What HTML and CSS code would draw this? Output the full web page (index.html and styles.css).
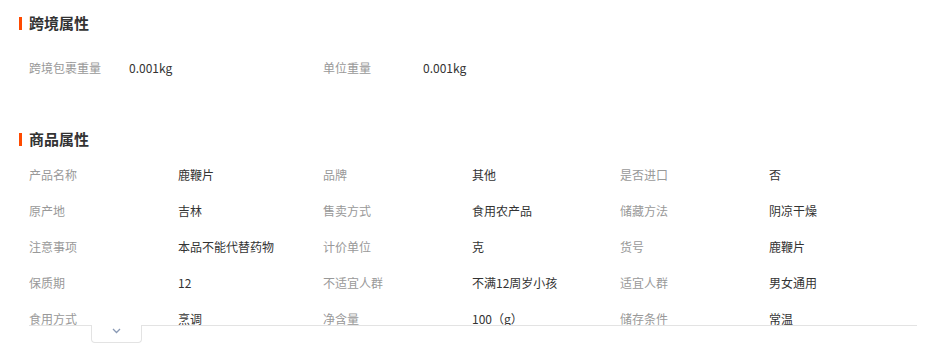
FILE: index.html
```html
<!DOCTYPE html>
<html lang="zh-CN">
<head>
<meta charset="utf-8">
<link rel="stylesheet" href="styles.css">
</head>
<body>
<div class="page">
  <section class="block block-cross">
    <h2 class="title">跨境属性</h2>
    <div class="grid grid-cross">
      <div class="cell"><span class="label">跨境包裹重量</span><span class="value">0.001kg</span></div>
      <div class="cell"><span class="label">单位重量</span><span class="value">0.001kg</span></div>
    </div>
  </section>
  <section class="block block-goods">
    <h2 class="title">商品属性</h2>
    <div class="fold">
      <div class="grid grid-goods">
        <div class="cell"><span class="label">产品名称</span><span class="value">鹿鞭片</span></div>
        <div class="cell"><span class="label">品牌</span><span class="value">其他</span></div>
        <div class="cell"><span class="label">是否进口</span><span class="value">否</span></div>
        <div class="cell"><span class="label">原产地</span><span class="value">吉林</span></div>
        <div class="cell"><span class="label">售卖方式</span><span class="value">食用农产品</span></div>
        <div class="cell"><span class="label">储藏方法</span><span class="value">阴凉干燥</span></div>
        <div class="cell"><span class="label">注意事项</span><span class="value">本品不能代替药物</span></div>
        <div class="cell"><span class="label">计价单位</span><span class="value">克</span></div>
        <div class="cell"><span class="label">货号</span><span class="value">鹿鞭片</span></div>
        <div class="cell"><span class="label">保质期</span><span class="value">12</span></div>
        <div class="cell"><span class="label">不适宜人群</span><span class="value">不满12周岁小孩</span></div>
        <div class="cell"><span class="label">适宜人群</span><span class="value">男女通用</span></div>
        <div class="cell"><span class="label">食用方式</span><span class="value">烹调</span></div>
        <div class="cell"><span class="label">净含量</span><span class="value">100（g）</span></div>
        <div class="cell"><span class="label">储存条件</span><span class="value">常温</span></div>
      </div>
    </div>
    <div class="toggle-row">
      <button class="toggle" type="button" aria-label="展开">
        <svg width="9" height="6" viewBox="0 0 9 6"><path d="M1 1l3.5 3.5L8 1" fill="none" stroke="#8a9ab5" stroke-width="1.3"/></svg>
      </button>
    </div>
  </section>
</div>
</body>
</html>
```

FILE: styles.css
```css
* { box-sizing: border-box; }
html, body { margin: 0; padding: 0; background: #fff; }
body {
  font-family: "Noto Sans CJK SC", "Noto Sans", sans-serif;
  font-size: 12px;
  color: #333;
}
.page { width: 932px; padding: 13px 15px 0 19px; }
.title {
  display: flex;
  align-items: center;
  gap: 7px;
  margin: 0;
  height: 20px;
  line-height: 20px;
  font-size: 15px;
  font-weight: bold;
  color: #333;
}
.title::before {
  content: "";
  width: 3px;
  height: 13px;
  margin-top: 1px;
  background: #ff4a00;
}
.block-cross .title { margin-bottom: 16px; }
.block-goods { margin-top: 44px; }
.block-goods .title { margin-bottom: 7px; }
.grid {
  display: grid;
  grid-template-columns: 294px 297px 1fr;
  padding-left: 10px;
}
.cell {
  display: flex;
  align-items: center;
  height: 36px;
}
.label { color: #999; flex: none; }
.grid-cross .label { width: 100px; }
.grid-goods .label { width: 149px; }
.value { color: #333; }
.fold {
  margin-left: 10px;
  height: 170px;
  overflow: hidden;
  border-bottom: 1px solid #e3e3e3;
}
.fold .grid { padding-left: 0; }
.toggle-row { padding-left: 72px; margin-top: -1px; }
.toggle {
  display: flex;
  align-items: flex-start;
  justify-content: center;
  width: 51px;
  height: 18px;
  padding: 3px 0 0;
  background: #fff;
  border: 1px solid #e3e3e3;
  border-top: none;
  border-radius: 0 0 4px 4px;
  cursor: pointer;
}
```
